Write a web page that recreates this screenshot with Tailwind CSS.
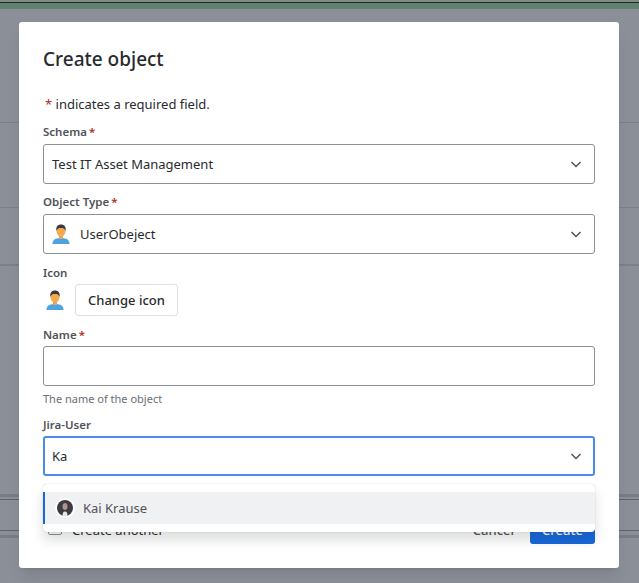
<!DOCTYPE html>
<html lang="en">
<head>
<meta charset="UTF-8">
<title>Create object</title>
<script src="https://cdn.jsdelivr.net/npm/@tailwindcss/browser@4"></script>
</head>
<body class="relative h-[583px] w-[639px] overflow-hidden bg-[#8b8f98] font-['Noto_Sans',sans-serif] text-[#292a2e]">
    <!-- page behind the overlay -->
    <div class="flex h-[583px] flex-col">
        <div class="h-[2px] bg-[#7f8c88]"></div>
        <div class="h-[1px] bg-[#1d2a26]"></div>
        <div class="h-[6px] bg-[#5f8272]"></div>
        <div class="mt-[113px] h-[1px] bg-[#7c8089]"></div>
        <div class="mt-[84px] h-[1px] bg-[#7c8089]"></div>
        <div class="mt-[56px] h-[2px] bg-[#7c8089]"></div>
        <div class="mt-[228px] h-[3px] bg-[#787c85]"></div>
        <div class="mt-[2px] h-[1px] bg-[#5f636c]"></div>
        <div class="mt-[30px] h-[1px] bg-[#5f636c]"></div>
        <div class="mt-[4px] h-[3px] bg-[#787c85]"></div>
    </div>

    <!-- modal -->
    <div class="absolute top-[22px] left-[19px] flex h-[546px] w-[600px] flex-col rounded-[3px] bg-white px-6 pt-6 shadow-lg">
        <h1 class="h-[26px] text-[19px] leading-[26px] font-medium">Create object</h1>
        <p class="mt-[22px] h-[20px] pl-[2px] text-[13px] leading-[20px]"><span class="text-[#ae2e24]">*</span> indicates a required field.</p>

        <label class="mt-[10px] flex h-[16px] items-center text-[11.5px] leading-[16px] font-semibold text-[#505258]">Schema<span class="ml-[2px] text-[#ae2e24]">*</span></label>
        <div class="mt-[4px] flex h-[40px] items-center justify-between rounded-[3px] border border-[#8c8f97] pr-[12px] pl-[8px] text-[13px]">
            <span class="pt-[2px]">Test IT Asset Management</span>
            <svg class="h-[12px] w-[12px] text-[#505258]" viewBox="0 0 12 12" fill="none" stroke="currentColor" stroke-width="1.5"><path d="M1.5 4l4.5 4.5L10.500 4"/></svg>
        </div>

        <label class="mt-[10px] flex h-[16px] items-center text-[11.5px] leading-[16px] font-semibold text-[#505258]">Object Type<span class="ml-[2px] text-[#ae2e24]">*</span></label>
        <div class="mt-[4px] flex h-[40px] items-center justify-between rounded-[3px] border border-[#8c8f97] pr-[12px] pl-[8px] text-[13px]">
            <span class="flex items-center gap-[10px]">
                <svg class="h-[20px] w-[18px]" viewBox="0 0 18 20"><path d="M0.500 20c0-4 2.500-6 8.500-6s8.500 2 8.500 6z" fill="#4da3e0"/><rect x="7" y="11" width="4" height="4" fill="#e8a35c"/><ellipse cx="9" cy="7" rx="4.500" ry="5.500" fill="#f5a94f"/><path d="M4.300 7C3.800 2.500 6 .5 9 .5s5.200 2 4.700 6.500C13 4.500 11 4 9 4S5 4.500 4.300 7z" fill="#3b3a3a"/></svg>
                <span class="pt-[2px]">UserObeject</span>
            </span>
            <svg class="h-[12px] w-[12px] text-[#505258]" viewBox="0 0 12 12" fill="none" stroke="currentColor" stroke-width="1.5"><path d="M1.5 4l4.5 4.5L10.500 4"/></svg>
        </div>

        <label class="mt-[10px] h-[16px] pt-[1px] text-[11.5px] leading-[16px] font-semibold text-[#505258]">Icon</label>
        <div class="mt-[4px] flex h-[32px] items-center gap-[11px] pl-[3px]">
            <svg class="h-[20px] w-[18px]" viewBox="0 0 18 20"><path d="M0.500 20c0-4 2.500-6 8.500-6s8.500 2 8.500 6z" fill="#4da3e0"/><rect x="7" y="11" width="4" height="4" fill="#e8a35c"/><ellipse cx="9" cy="7" rx="4.500" ry="5.500" fill="#f5a94f"/><path d="M4.300 7C3.800 2.500 6 .5 9 .5s5.200 2 4.700 6.500C13 4.500 11 4 9 4S5 4.500 4.300 7z" fill="#3b3a3a"/></svg>
            <button class="h-[32px] rounded-[3px] border border-[#dcdfe4] px-[12px] pt-[1px] text-[13px] font-medium">Change icon</button>
        </div>

        <label class="mt-[10px] flex h-[16px] items-center pt-[2px] text-[11.5px] leading-[16px] font-semibold text-[#505258]">Name<span class="ml-[2px] text-[#ae2e24]">*</span></label>
        <div class="mt-[4px] h-[40px] rounded-[3px] border border-[#8c8f97]"></div>
        <p class="mt-[4px] h-[16px] pt-[1px] text-[11px] leading-[16px] text-[#6b6e76]">The name of the object</p>

        <label class="mt-[10px] h-[16px] pt-[1px] text-[11.5px] leading-[16px] font-semibold text-[#505258]">Jira-User</label>
        <div class="mt-[4px] flex h-[40px] items-center justify-between rounded-[3px] border-2 border-[#4c8be8] pr-[11px] pl-[7px] text-[13px]">
            <span class="pt-[2px]">Ka</span>
            <svg class="h-[12px] w-[12px] text-[#505258]" viewBox="0 0 12 12" fill="none" stroke="currentColor" stroke-width="1.5"><path d="M1.5 4l4.5 4.5L10.500 4"/></svg>
        </div>

        <!-- footer, partly under the menu -->
        <div class="mt-[36px] flex h-[32px] items-center justify-between">
            <label class="flex items-center gap-[10px] pl-[5px] text-[13px]">
                <span class="h-[14px] w-[14px] rounded-[2px] border border-[#8c8f97]"></span>
                <span class="pt-[6px]">Create another</span>
            </label>
            <div class="flex items-center gap-[16px]">
                <button class="pt-[6px] text-[13px] font-medium text-[#505258]">Cancel</button>
                <button class="h-[32px] w-[65px] rounded-[3px] bg-[#1868db] pt-[6px] text-[13px] font-medium text-white">Create</button>
            </div>
        </div>

        <!-- dropdown menu -->
        <div class="absolute top-[462px] left-[24px] w-[552px] rounded-[4px] bg-white py-[8px] shadow-[0_8px_12px_rgba(30,31,33,0.15),0_0_1px_rgba(30,31,33,0.31)]">
            <div class="flex h-[32px] items-center gap-[8px] border-l-2 border-[#1868db] bg-[#f0f1f2] pl-[10px] text-[13px] text-[#505258]">
                <span class="flex h-[20px] w-[20px] items-center justify-center rounded-full bg-white">
                    <svg class="h-[16px] w-[16px]" viewBox="0 0 16 16"><circle cx="8" cy="8" r="8" fill="#3c3a42"/><ellipse cx="8" cy="6.500" rx="2.500" ry="3.500" fill="#b09488"/><path d="M5.500 16c0-3 .5-4.500 2.500-4.500s2.500 1.500 2.500 4.500z" fill="#e8e6ea"/></svg>
                </span>
                <span class="pt-[1px]">Kai Krause</span>
            </div>
        </div>
    </div>
</body>
</html>
